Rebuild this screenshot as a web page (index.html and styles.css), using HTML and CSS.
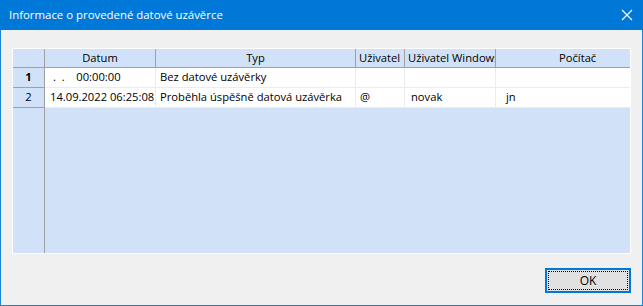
FILE: index.html
```html
<!DOCTYPE html>
<html lang="cs">
<head>
    <meta charset="UTF-8">
    <title>Informace o provedené datové uzávěrce</title>
    <link rel="stylesheet" href="styles.css">
</head>
<body>
    <div class="window">
        <div class="titlebar">
            <span class="title">Informace o provedené datové uzávěrce</span>
            <svg class="close" width="12" height="12" viewBox="0 0 12 12">
                <path d="M1 1 L11 11 M11 1 L1 11" stroke="#fff" stroke-width="1.1" fill="none"/>
            </svg>
        </div>

        <div class="client">
            <div class="grid">
                <div class="row head">
                    <div class="cell c-ind"></div>
                    <div class="cell c-date center">Datum</div>
                    <div class="cell c-type center">Typ</div>
                    <div class="cell c-user">Uživatel</div>
                    <div class="cell c-win">Uživatel Windows</div>
                    <div class="cell c-pc pc-head">Počítač</div>
                </div>
                <div class="row">
                    <div class="cell c-ind center current">1</div>
                    <div class="cell c-date mask">.  .    00:00:00</div>
                    <div class="cell c-type">Bez datové uzávěrky</div>
                    <div class="cell c-user"></div>
                    <div class="cell c-win"></div>
                    <div class="cell c-pc"></div>
                </div>
                <div class="row">
                    <div class="cell c-ind center">2</div>
                    <div class="cell c-date">14.09.2022 06:25:08</div>
                    <div class="cell c-type">Proběhla úspěšně datová uzávěrka</div>
                    <div class="cell c-user">@</div>
                    <div class="cell c-win pad-win">novak</div>
                    <div class="cell c-pc pad-pc">jn</div>
                </div>
                <div class="empty">
                    <div class="empty-ind"></div>
                </div>
            </div>

            <div class="buttons">
                <button class="ok"><span>OK</span></button>
            </div>
        </div>
    </div>
</body>
</html>
```

FILE: styles.css
```css
:root {
    --title-blue: #0078d7;
    --frame-blue: #1883d7;
    --face: #f0f0f0;
    --grid-blue: #d1e2f8;
    --head-line: #a0a0a0;
    --cell-line: #ececec;
}

* {
    margin: 0;
    padding: 0;
    box-sizing: border-box;
}

body {
    font-family: 'Open Sans', 'Noto Sans', sans-serif;
    font-size: 11.2px;
    color: #000;
    background: var(--face);
}

.window {
    width: 643px;
    height: 306px;
    border: 1px solid var(--frame-blue);
    border-top: none;
    background: var(--face);
    display: flex;
    flex-direction: column;
}

.titlebar {
    height: 30px;
    margin: 0 -1px;
    background: var(--title-blue);
    display: flex;
    align-items: center;
    justify-content: space-between;
    padding: 0 10px 2px 9px;
}

.title {
    color: #fff;
    font-size: 11.4px;
}

.close {
    display: block;
    margin-top: 1px;
}

.client {
    flex: 1;
    padding: 18px 11px 0 11px;
    display: flex;
    flex-direction: column;
}

/* grid */
.grid {
    height: 206px;
    border: 1px solid #fff;
    background: var(--grid-blue);
    display: flex;
    flex-direction: column;
}

.row {
    display: flex;
    height: 20px;
    background: #fff;
    border-bottom: 1px solid var(--cell-line);
}

.row.head {
    height: 19px;
    background: var(--grid-blue);
    border-bottom: 1px solid var(--head-line);
}

.cell {
    border-right: 1px solid var(--cell-line);
    padding: 0 4px;
    line-height: 18px;
    white-space: pre;
    overflow: hidden;
}

.head .cell {
    border-right-color: var(--head-line);
    padding: 0 3px;
}

.c-ind {
    width: 32px;
    background: var(--grid-blue);
    border-right-color: var(--head-line);
    border-bottom: 1px solid var(--head-line);
    margin-bottom: -1px;
}
.c-date { width: 111px; padding-left: 5px; }
.c-type { width: 200px; }
.c-user { width: 49px; }
.c-win  { width: 91px; }
.c-pc   { width: 133px; border-right: none; }

.center { text-align: center; }
.current { font-weight: bold; }

.mask { padding-left: 8px; }
.head .pc-head { padding-left: 63px; }
.pad-win { padding-left: 6px; }
.pad-pc { padding-left: 10px; }

.empty {
    flex: 1;
    display: flex;
}

.empty-ind {
    width: 32px;
    border-right: 1px solid var(--head-line);
}

/* buttons */
.buttons {
    display: flex;
    justify-content: flex-end;
    margin-top: 14px;
}

.ok {
    width: 86px;
    height: 25px;
    border: 2px solid var(--title-blue);
    background: #e1e1e1;
    padding: 1px;
    font-family: inherit;
    font-size: 12px;
    color: #000;
}

.ok span {
    display: flex;
    align-items: center;
    justify-content: center;
    height: 100%;
    border: 1px dotted #000;
}
```
